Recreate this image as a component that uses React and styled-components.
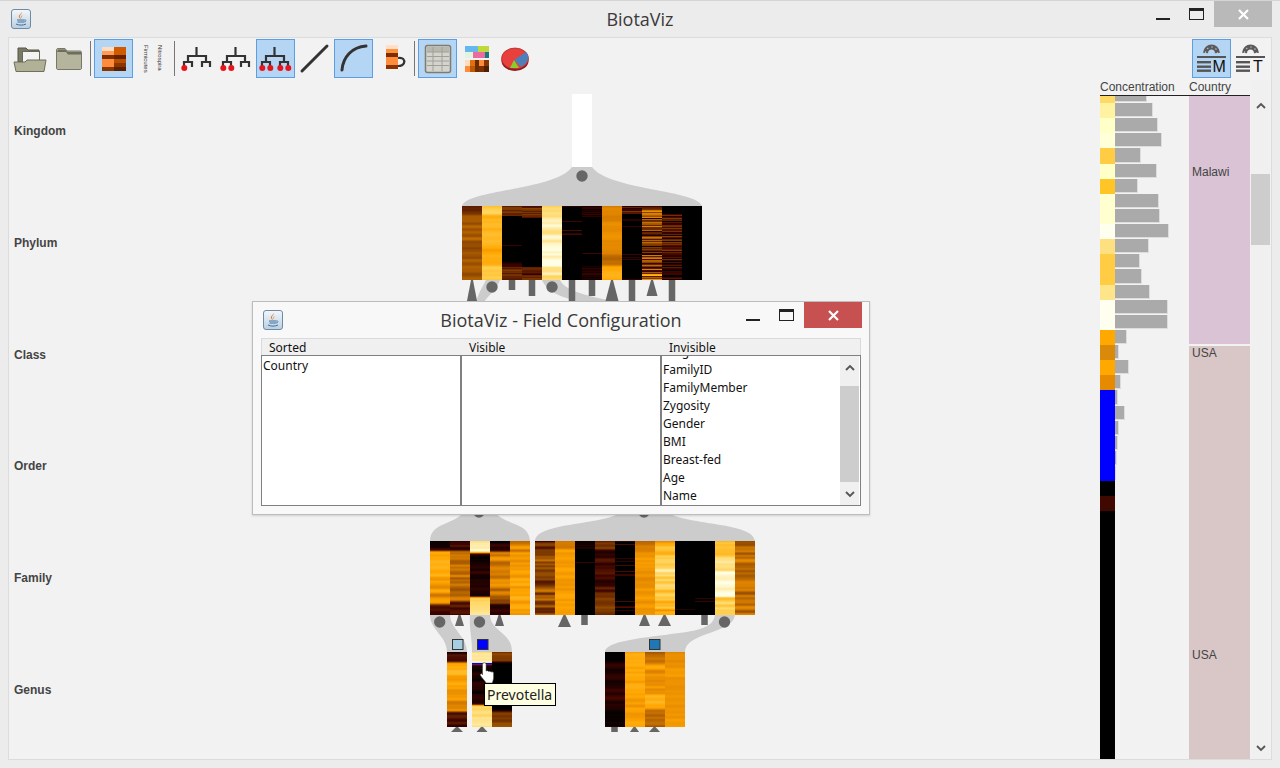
import React from "react";
import styled, { createGlobalStyle } from "styled-components";

const Global = createGlobalStyle`
  html, body { margin: 0; padding: 0; background: #ececec; overflow: hidden; }
  * { box-sizing: border-box; }
`;

const Window = styled.div`
  position: relative;
  width: 1280px;
  height: 768px;
  display: flex;
  flex-direction: column;
  background: #ececec;
  border-top: 1px solid #d4d4d4;
  font-family: "Liberation Sans", Arial, sans-serif;
`;

const TitleBar = styled.div`
  position: relative;
  height: 36px;
  flex: none;
  display: flex;
  align-items: flex-start;
`;

const AppIcon = styled.div`
  margin: ${(p) => p.$margin};
  line-height: 0;
`;

const Title = styled.div`
  flex: 1;
  text-align: center;
  padding-left: 92px;
  font-family: "Open Sans", "Noto Sans", sans-serif;
  color: #3a3a3a;
  font-size: 18px;
  line-height: 36px;
`;

const Controls = styled.div`
  display: flex;
  align-items: flex-start;
  flex: none;
`;

const MinBtn = styled.div`
  width: 14px;
  height: 2px;
  background: #222;
  margin: ${(p) => p.$margin};
`;

const MaxBtn = styled.div`
  width: 15px;
  height: 12px;
  border: 1px solid #222;
  border-top-width: 3px;
  margin: ${(p) => p.$margin};
`;

const CloseBtn = styled.div`
  width: 58px;
  height: 26px;
  background: ${(p) => p.$bg};
  color: #fff;
  display: flex;
  align-items: center;
  justify-content: center;
  margin: ${(p) => p.$margin};
`;

const Body = styled.div`
  flex: 1;
  margin: 0 8px 8px;
  display: flex;
  flex-direction: column;
  background: #f2f2f2;
  border: 1px solid #dcdcdc;
  min-height: 0;
`;

const Toolbar = styled.div`
  height: 42px;
  flex: none;
  display: flex;
  align-items: flex-start;
  padding: 1px 1px 0 1px;
`;

const ToolButton = styled.div`
  width: 39px;
  height: 39px;
  flex: none;
  line-height: 0;
  border: 1px solid ${(p) => (p.$active ? "#5c9ee0" : "transparent")};
  background: ${(p) => (p.$active ? "#b5d5f4" : "transparent")};
  display: flex;
  align-items: center;
  justify-content: center;
`;

const Sep = styled.div`
  width: 1px;
  height: 35px;
  background: #777;
  flex: none;
  margin: 2px ${(p) => p.$right}px 0 ${(p) => p.$left}px;
`;

const Spacer = styled.div`
  flex: 1;
`;

const VerticalLabels = styled.div`
  display: flex;
  gap: 8px;
  line-height: 1;
  writing-mode: vertical-rl;
  flex-direction: column-reverse;
  font-family: "Liberation Sans", sans-serif;
  font-size: 6px;
  color: #333;
`;

const VLabel = styled.span`
  display: block;
  height: 28px;
`;

const Main = styled.div`
  flex: 1;
  display: flex;
  min-height: 0;
`;

const Ranks = styled.div`
  width: 91px;
  flex: none;
  display: flex;
  flex-direction: column;
  gap: 99.8px;
  padding: 45px 0 0 5px;
`;

const Rank = styled.div`
  font-size: 12px;
  line-height: 12px;
  font-weight: 700;
  color: #444;
`;

const Stage = styled.div`
  position: relative;
  width: 1000px;
  flex: none;
  line-height: 0;
`;

const Tip = styled.div`
  position: absolute;
  left: 384px;
  top: 603px;
  width: 72px;
  height: 23px;
  background: #ffffe1;
  border: 1px solid #000;
  color: #222;
  font-family: "Noto Sans", sans-serif;
  font-size: 14px;
  line-height: 22px;
  padding-left: 2px;
`;

const Side = styled.div`
  width: 150px;
  flex: none;
  display: flex;
  flex-direction: column;
`;

const SideHead = styled.div`
  height: 16px;
  flex: none;
  display: flex;
  border-bottom: 1px solid #222;
  color: #444;
  font-size: 12px;
  line-height: 14px;
`;

const HeadCell = styled.div`
  width: ${(p) => p.$w}px;
`;

const SideRow = styled.div`
  flex: 1;
  display: flex;
  min-height: 0;
`;

const ConcCol = styled.div`
  width: 89px;
  display: flex;
  flex-direction: column;
  overflow: hidden;
`;

const ConcRow = styled.div`
  display: flex;
  flex: ${(p) => (p.$fill ? 1 : "none")};
  height: ${(p) => (p.$fill ? "auto" : `${p.$h}px`)};
`;

const Swatch = styled.div`
  width: 15px;
  flex: none;
  background: ${(p) => p.$c};
`;

const Bar = styled.div`
  width: ${(p) => p.$w}px;
  background: #aaa;
  border-right: 1px solid #ddd;
  border-bottom: 1px solid #ddd;
  margin-bottom: 1px;
`;

const CountryCol = styled.div`
  width: 61px;
  display: flex;
  flex-direction: column;
  gap: 2px;
`;

const CountryBlock = styled.div`
  flex: ${(p) => (p.$h ? "none" : 1)};
  height: ${(p) => (p.$h ? `${p.$h}px` : "auto")};
  background: ${(p) => p.$c};
  padding: ${(p) => p.$pad}px 0 0 3px;
  color: #444;
  font-size: 12px;
  line-height: 13px;
`;

const CountryName = styled.div`
  margin-top: ${(p) => p.$mt || 0}px;
`;

const Scroll = styled.div`
  width: 19px;
  flex: none;
  display: flex;
  flex-direction: column;
  align-items: stretch;
  margin: 0 ${(p) => p.$mr || 0}px 0 ${(p) => p.$ml || 0}px;
  background: #f0f0f0;
`;

const ScrollEnd = styled.div`
  height: ${(p) => p.$h}px;
  flex: none;
  display: flex;
  align-items: ${(p) => (p.$pad ? "flex-start" : "center")};
  padding-top: ${(p) => p.$pad || 0}px;
  justify-content: center;
  line-height: 0;
`;

const Thumb = styled.div`
  height: ${(p) => p.$h}px;
  flex: none;
  background: #cdcdcd;
`;

const Dialog = styled.div`
  position: absolute;
  left: 252px;
  top: 300px;
  width: 618px;
  height: 214px;
  background: #f8f8f8;
  border: 1px solid #bdbdbd;
  box-shadow: 0 1px 2px rgba(0, 0, 0, 0.15);
  display: flex;
  flex-direction: column;
  padding: 0 8px 8px;
`;

const DialogBar = styled.div`
  height: 36px;
  flex: none;
  display: flex;
  margin: 0 -8px;
`;

const FieldHead = styled.div`
  display: grid;
  grid-template-columns: 200px 200px 1fr;
  height: 17px;
  flex: none;
  background: #f0f0f0;
  border: 1px solid #dadada;
  border-bottom: none;
  font-family: "Noto Sans", sans-serif;
  font-size: 12px;
  line-height: 17px;
  color: #111;
`;

const FieldTitle = styled.div`
  padding-left: 7px;
`;

const Fields = styled.div`
  display: grid;
  grid-template-columns: 200px 200px 1fr;
  flex: 1;
  min-height: 0;
  border: 1px solid #808080;
  background: #fff;
  font-family: "Noto Sans", sans-serif;
  font-size: 12px;
  line-height: 18px;
  color: #111;
`;

const FieldList = styled.div`
  border-right: ${(p) => (p.$last ? "none" : "2px solid #808080")};
  padding-left: 1px;
  overflow: hidden;
  display: flex;
`;

const Items = styled.div`
  flex: 1;
  margin-top: ${(p) => p.$mt}px;
`;

// ---- heat map helpers

const RAMP = [
  [0, [0, 0, 0]],
  [0.15, [64, 4, 0]],
  [0.35, [135, 66, 0]],
  [0.52, [224, 132, 0]],
  [0.62, [255, 165, 0]],
  [0.8, [255, 208, 80]],
  [1, [255, 255, 232]],
];

const heat = (v) => {
  const l = Math.max(0, Math.min(1, v));
  for (let i = 1; i < RAMP.length; i++) {
    if (l <= RAMP[i][0]) {
      const [a, ca] = RAMP[i - 1];
      const [b, cb] = RAMP[i];
      const t = (l - a) / (b - a);
      return `rgb(${ca.map((c, k) => Math.round(c + (cb[k] - c) * t)).join(",")})`;
    }
  }
  return "#ffffe8";
};

const rng = (seed) => {
  let s = seed;
  return () => {
    s = (s * 16807) % 2147483647;
    return s / 2147483647;
  };
};

const blur = (vals) =>
  vals.map((v, i) => {
    const a = vals[Math.max(0, i - 1)];
    const b = vals[Math.min(vals.length - 1, i + 1)];
    return (a + 2 * v + b) / 4;
  });

const columnValues = ([segs, noise, lines = 0], seed, h) => {
  const r = rng(seed);
  const vals = [];
  for (let i = 0; i < h; i++) {
    const f = i / h;
    const seg = segs.find((s) => f < s[0]) || segs[segs.length - 1];
    let v = seg[1];
    if (v > 0) v += (r() - 0.5) * noise;
    else if (r() < lines) v = 0.08 + r() * 0.1;
    vals.push(v);
  }
  // the black columns keep their thin lines, the others get smoothed
  if (lines > 0) return vals;
  return blur(blur(vals));
};

// column = [segments [[endFraction, level], ...], noise, chance of a dark red line]
const HeatMap = ({ x, y, cols, seed, h = 74 }) => (
  <g shapeRendering="crispEdges">
    {cols.map((col, c) =>
      columnValues(col, seed * 131 + c * 977 + 7, h).map((v, i) => (
        <rect key={`${c}-${i}`} x={x + c * 20} y={y + i} width={20} height={1.05} fill={heat(v)} />
      ))
    )}
  </g>
);

const PHYLUM = [
  [[[0.12, 0.27], [1, 0.4]], 0.16],
  [[[0.12, 0.8], [0.55, 0.7], [0.8, 0.64], [1, 0.77]], 0.16],
  [[[0.13, 0.3], [0.75, 0], [0.82, 0.12], [1, 0.28]], 0.14, 0.03],
  [[[0.15, 0.27], [0.82, 0], [1, 0.22]], 0.2, 0.01],
  [[[0.18, 0.86], [0.38, 0.93], [0.55, 0.95], [0.8, 1], [0.92, 0.9], [1, 0.8]], 0.2],
  [[[1, 0]], 0, 0.07],
  [[[0.14, 0.1], [0.8, 0], [1, 0.08]], 0.12, 0.06],
  [[[0.65, 0.54], [0.8, 0.46], [1, 0.64]], 0.12],
  [[[0.1, 0.2], [0.8, 0], [1, 0]], 0.25, 0.06],
  [[[0.14, 0.36], [0.7, 0.28], [0.9, 0.32], [1, 0.46]], 0.5, 0.01],
  [[[0.1, 0], [0.72, 0.18], [1, 0.06]], 0.34, 0.01],
  [[[1, 0]], 0],
];
const FAM_L = [
  [[[0.13, 0.1], [0.17, 0.75], [0.55, 0.66], [0.85, 0.56], [1, 0.2]], 0.24],
  [[[0.13, 0.14], [0.55, 0.46], [0.8, 0.42], [1, 0.2]], 0.3],
  [[[0.15, 0.92], [0.75, 0.06], [1, 0.85]], 0.2],
  [[[0.13, 0.08], [0.75, 0.5], [0.85, 0.38], [1, 0.12]], 0.28],
  [[[0.15, 0.52], [1, 0.62]], 0.24],
];
const FAM_R = [
  [[[1, 0.33]], 0.5],
  [[[0.1, 0.52], [1, 0.6]], 0.14],
  [[[0.1, 0.05], [1, 0]], 0.05, 0.02],
  [[[0.1, 0.3], [0.75, 0.16], [1, 0.3]], 0.28],
  [[[1, 0]], 0, 0.12],
  [[[0.15, 0.47], [1, 0.57]], 0.16],
  [[[0.2, 0.68], [0.7, 0.82], [1, 0.68]], 0.4],
  [[[1, 0]], 0, 0.03],
  [[[1, 0]], 0, 0.03],
  [[[0.2, 0.72], [0.4, 0.85], [0.75, 0.97], [1, 0.76]], 0.26],
  [[[1, 0.46]], 0.26],
];
const GEN_A = [[[[0.13, 0.17], [0.2, 0.6], [0.5, 0.66], [0.8, 0.56], [1, 0.2]], 0.3]];
const GEN_B = [
  [[[0.15, 0.92], [0.18, 0.1], [0.7, 0.06], [1, 0.85]], 0.24],
  [[[0.13, 0.32], [0.78, 0], [1, 0.34]], 0.2],
];
const GEN_C = [
  [[[0.13, 0], [0.45, 0.08], [0.75, 0.1], [1, 0.02]], 0.16],
  [[[1, 0.62]], 0.16],
  [[[0.15, 0.47], [0.55, 0.58], [0.75, 0.64], [1, 0.48]], 0.2],
  [[[0.15, 0.54], [1, 0.57]], 0.1],
];

// ---- tree diagram

const Circle = ({ x, y }) => <circle cx={x} cy={y} r={5.7} fill="#666" />;
const Tri = ({ x, y, w, h }) => <path d={`M${x - w / 2} ${y + h}L${x - 1} ${y}h2L${x + w / 2} ${y + h}Z`} fill="#666" />;
const Box = ({ x, y, h, w = 6.5 }) => <rect x={x - w / 2} y={y} width={w} height={h} fill="#666" />;
const Mark = ({ x, c }) => <rect x={x} y={639.5} width={10.5} height={10} fill={c} stroke="#333" />;

const Tree = () => (
  // viewBox keeps the numbers in page coordinates
  <svg width="1000" height="680" viewBox="100 80 1000 680">
    <rect x="572" y="94" width="20" height="74" fill="#fff" />
    <path d="M462 206C466 190 556 190 572 167H592C608 190 698 190 702 206Z" fill="#ccc" />
    <Circle x={582} y={176} />
    <HeatMap x={462} y={206} cols={PHYLUM} seed={3} />

    <path d="M476 302C479 292 482 288 486 280H500C497 288 490 294 484 302Z" fill="#ccc" />
    <path d="M542 280H560C566 292 590 296 616 302H580C566 298 548 294 542 280Z" fill="#ccc" />
    <Tri x={472} y={280} w={10} h={21} />
    <Circle x={492} y={287} />
    <Box x={512} y={280} h={10} />
    <Box x={532} y={280} h={16} />
    <Circle x={552} y={287} />
    <Box x={572} y={280} h={21} />
    <Box x={592} y={280} h={16} />
    <Tri x={612} y={280} w={13} h={21} />
    <Box x={632} y={280} h={21} />
    <Tri x={652} y={280} w={11} h={16} />
    <Box x={672} y={280} h={21} />

    <path d="M430 541C431 522 452 526 464 512H494C507 526 529 522 530 541Z" fill="#ccc" />
    <path d="M535 541C537 522 600 526 622 512H666C690 526 753 522 755 541Z" fill="#ccc" />
    <Circle x={479} y={512} />
    <Circle x={644} y={512} />
    <HeatMap x={430} y={541} cols={FAM_L} seed={11} />
    <HeatMap x={535} y={541} cols={FAM_R} seed={23} />

    <path d="M430 615H450C451 630 467 636 467 652H447C447 636 430 630 430 615Z" fill="#ccc" />
    <path d="M470 615H490C491 632 512 632 512 652H472C472 636 469 630 470 615Z" fill="#ccc" />
    <path d="M605 652C605 636 690 636 705 627C712 624 714 620 715 615H735C733 634 685 632 685 652Z" fill="#ccc" />
    <Circle x={439.7} y={622} />
    <Tri x={459.5} y={615} w={9} h={11} />
    <Circle x={479.5} y={622} />
    <Tri x={499.5} y={615} w={9} h={11} />
    <Tri x={564.5} y={615} w={13} h={12} />
    <Box x={584.5} y={615} h={10} />
    <Tri x={644.5} y={615} w={11} h={11} />
    <Tri x={664.5} y={615} w={13} h={11} />
    <Box x={704.5} y={615} h={10} />
    <Circle x={724.5} y={622} />

    <Mark x={452.5} c="#a6cee3" />
    <Mark x={477.5} c="#0000ff" />
    <Mark x={649.5} c="#1f78b4" />

    <HeatMap x={447} y={652} cols={GEN_A} seed={31} h={75} />
    <HeatMap x={472} y={652} cols={GEN_B} seed={37} h={75} />
    <HeatMap x={605} y={652} cols={GEN_C} seed={41} h={75} />
    <rect x="472" y="663" width="20" height="1.5" fill="#0000ff" />

    <Tri x={457} y={727} w={12} h={5} />
    <Tri x={482} y={727} w={11} h={5} />
    <Box x={614.5} y={727} h={5} />
    <Tri x={634.5} y={727} w={9} h={5} />
    <Tri x={654.5} y={727} w={11} h={5} />

    <path
      d="M482.5 664.5a1.8 1.8 0 0 1 3.600 0V671c1-.6 2.200-.4 2.600.5.900-.6 2-.3 2.300.6.900-.5 2.600-.2 2.600 1.200V678c0 2-1 3-1.200 5H486c-1-2.400-4-5-5.600-7.600-.7-1.200.7-2.400 1.800-1.400l.3.900Z"
      fill="#fff"
      stroke="#333"
      strokeWidth="0.5"
    />
  </svg>
);

// ---- toolbar icons

const JavaIcon = () => (
  <svg width="21" height="21" viewBox="0 0 21 21">
    <defs>
      <linearGradient id="jv" x1="0" y1="0" x2="0" y2="1">
        <stop offset="0" stopColor="#f4f7fa" />
        <stop offset="1" stopColor="#b9cfe2" />
      </linearGradient>
    </defs>
    <rect x="0.5" y="0.5" width="19" height="19" rx="2.5" fill="url(#jv)" stroke="#6f8aa4" />
    <path d="M10 3c2 2-2 3-1 5 .4 1 1 1.300 1 2-1.600-1-3-2.500-1.500-4C9.500 5 10.300 4.400 10 3Z" fill="#e5761e" />
    <path d="M12 6c-1 1-1.500 1.500-.8 3-1-.6-1.700-2 .8-3Z" fill="#e5761e" />
    <path d="M6 11h7.500M6.500 13h6.500M5 15c3 1.500 7 1.500 10 0" stroke="#3c6f9c" strokeWidth="1" fill="none" />
    <path d="M13.500 11c2-.5 2 1.800-.5 2" stroke="#3c6f9c" strokeWidth="0.8" fill="none" />
  </svg>
);

const FolderOpen = () => (
  <svg width="34" height="30" viewBox="0 0 34 30">
    <path d="M5 4h8l2 2h11v12H5Z" fill="#7b7b64" stroke="#55554a" />
    <rect x="9.500" y="7.500" width="17" height="12" fill="#f4f4f2" stroke="#6a6a58" />
    <path d="M1 18h11l2-2h19l-2 11.500H3Z" fill="#b1b197" stroke="#6f6f5c" />
  </svg>
);

const FolderClosed = () => (
  <svg width="28" height="24" viewBox="0 0 28 24">
    <path d="M1.500 3c0-1 .5-1.500 1.500-1.500h7l2 2.500h13c1 0 1.500.5 1.500 1.500V21c0 1-.5 1.500-1.500 1.500H3c-1 0-1.500-.5-1.500-1.500Z" fill="#b5b59d" stroke="#77776a" />
    <path d="M2 5h9l2 2.500h13V5H12.500L10 2.500H3Z" fill="#6d6d59" />
  </svg>
);

const HeatIcon = () => {
  const left = ["#ffdcc0", "#ff9a58", "#7c3000", "#ff8c3c", "#ff8c3c", "#8a3600"];
  const right = ["#d05a00", "#d05a00", "#632300", "#b84c00", "#8a3600", "#5c2000"];
  return (
    <svg width="24" height="24" viewBox="0 0 24 24" shapeRendering="crispEdges">
      {left.map((c, i) => (
        <rect key={i} x="0" y={i * 4} width="12" height="4" fill={c} />
      ))}
      {right.map((c, i) => (
        <rect key={i} x="12" y={i * 4} width="12" height="4" fill={c} />
      ))}
    </svg>
  );
};

const TreeIcon = ({ dots }) => {
  const xs = [5.3, 13.3, 23.3, 31.3];
  return (
    <svg width="37" height="37" viewBox="0 0 37 37">
      <path
        d="M18 7V15M9.500 21V16H27.500V21M5.500 27V22H13.500V27M23.500 27V22H31.500V27"
        transform="translate(-0.5 0)"
        fill="none"
        stroke="#333"
        strokeWidth="2.200"
      />
      {xs.slice(0, dots).map((x, i) => (
        <circle key={i} cx={x} cy={28} r={3} fill="#e8141c" />
      ))}
    </svg>
  );
};

const LineIcon = () => (
  <svg width="37" height="37" viewBox="0 0 37 37">
    <path d="M6 31L31 6" stroke="#333" strokeWidth="3" strokeLinecap="round" />
  </svg>
);

const CurveIcon = () => (
  <svg width="37" height="37" viewBox="0 0 37 37">
    <path d="M7 30C8 17 17 7 31 6" stroke="#333" strokeWidth="3" strokeLinecap="round" fill="none" />
  </svg>
);

const LoopIcon = () => {
  const rows = ["#ffdfc7", "#ff9040", "#7c2e00", "#ff8c3c", "#ff8c3c", "#8a3300"];
  return (
    <svg width="37" height="37" viewBox="0 0 37 37">
      <g shapeRendering="crispEdges">
        {rows.map((c, i) => (
          <rect key={i} x="12" y={5 + i * 4} width="12" height="4" fill={c} />
        ))}
      </g>
      <path d="M24 18c5-1 7 2 6 5-1 2.500-3 3-6 3" stroke="#333" strokeWidth="2.200" fill="none" />
    </svg>
  );
};

const TableIcon = () => (
  <svg width="30" height="32" viewBox="0 0 30 32">
    <rect x="2.500" y="2.500" width="25" height="27" rx="2" fill="#d4d4ce" stroke="#7c7c72" strokeWidth="1.500" />
    <rect x="4" y="4" width="22" height="5" fill="#b8b8b0" />
    <path d="M10 4V28M19 4V28M4 9H26M4 13.500H26M4 18H26M4 22.500H26" stroke="#a0a096" fill="none" />
  </svg>
);

const ColorIcon = () => {
  const shades = ["#ffdcc0", "#e07010", "#6c2c00", "#ff8c3c", "#8a3600", "#ff8c3c", "#c05a00", "#6c2c00", "#7c3000", "#4e2000"];
  return (
    <svg width="24" height="26" viewBox="0 0 24 26" shapeRendering="crispEdges">
      <rect x="0" y="0" width="13" height="6" fill="#66b8ec" />
      <rect x="13" y="0" width="11" height="6" fill="#bfd93c" />
      <rect x="0" y="6" width="8" height="6" fill="#dff5e2" />
      <rect x="8" y="6" width="12" height="6" fill="#ec6aa0" />
      <rect x="20" y="6" width="4" height="6" fill="#127a80" />
      {shades.map((c, i) => (
        <rect key={i} x={(i % 5) * 4.8} y={14 + Math.floor(i / 5) * 6} width="4.8" height="6" fill={c} />
      ))}
    </svg>
  );
};

const PieIcon = () => (
  <svg width="30" height="26" viewBox="0 0 30 26">
    <ellipse cx="14" cy="15" rx="13.500" ry="10" fill="#8c1c22" />
    <ellipse cx="14" cy="12.500" rx="13.500" ry="10.500" fill="#e8403c" stroke="#a82428" strokeWidth="0.7" />
    <path d="M13 14L25 6C29 10 28 17 20 21Z" fill="#4f7fb8" />
    <path d="M13 14L18 22H9Z" fill="#8ccc28" />
  </svg>
);

const LayoutIcon = ({ letter }) => (
  <svg width="37" height="37" viewBox="0 0 37 37">
    <path d="M12.500 13C13 5 24 5 24.500 13" fill="none" stroke="#5a5a5a" strokeWidth="5" />
    <path d="M12.500 13C13 5 24 5 24.500 13" fill="none" stroke="#bbb" strokeWidth="1.200" strokeDasharray="1.500 3" />
    <rect x="4" y="16" width="29" height="2" fill="#555" />
    <rect x="4" y="21" width="14" height="2.400" fill="#555" />
    <rect x="4" y="25.500" width="14" height="2.400" fill="#555" />
    <rect x="4" y="29.500" width="14" height="2.400" fill="#555" />
    <text x={letter === "M" ? 19.500 : 21} y="32" fontFamily="Liberation Sans, sans-serif" fontSize="16" fill="#111">
      {letter}
    </text>
  </svg>
);

const Chevron = ({ up }) => (
  <svg width="10" height="7" viewBox="0 0 10 7">
    <path d={up ? "M1 6L5 2L9 6" : "M1 1L5 5L9 1"} fill="none" stroke="#555" strokeWidth="1.800" />
  </svg>
);

const Cross = () => (
  <svg width="11" height="11" viewBox="0 0 11 11">
    <path d="M1 1L10 10M10 1L1 10" stroke="#fff" strokeWidth="2.200" />
  </svg>
);

// ---- data

const CONC = [
  ["#ffd966", 32, 7],
  ["#fff2a0", 38],
  ["#ffffc8", 43],
  ["#ffffd8", 47],
  ["#ffcc44", 26],
  ["#ffffc8", 42],
  ["#ffc426", 23],
  ["#ffffd0", 44],
  ["#ffffd0", 45],
  ["#fffff0", 54],
  ["#ffe080", 34],
  ["#ffcc44", 25],
  ["#ffcc44", 27],
  ["#ffe58a", 35],
  ["#fffff0", 53],
  ["#fffff0", 53],
  ["#ffa800", 12],
  ["#d98a08", 4],
  ["#ffa800", 14],
  ["#e68a00", 6],
  ["#0000ff", 3],
  ["#0000ff", 10],
  ["#0000ff", 4],
  ["#0000ff", 3],
  ["#0000ff", 2],
  ["#0000ff", 1],
  ["#000000", 0],
  ["#400800", 0],
];

const RANKS = ["Kingdom", "Phylum", "Class", "Order", "Family", "Genus"];
const INVISIBLE = ["Height", "FamilyID", "FamilyMember", "Zygosity", "Gender", "BMI", "Breast-fed", "Age", "Name"];

export default function App() {
  return (
    <Window>
      <Global />
      <TitleBar>
        <AppIcon $margin="8px 0 0 11px">
          <JavaIcon />
        </AppIcon>
        <Title>BiotaViz</Title>
        <Controls>
          <MinBtn $margin="17px 0 0 0" />
          <MaxBtn $margin="7px 0 0 19px" />
          <CloseBtn $bg="#b9b9b9" $margin="0 8px 0 10px">
            <Cross />
          </CloseBtn>
        </Controls>
      </TitleBar>
      <Body>
        <Toolbar>
          <ToolButton>
            <FolderOpen />
          </ToolButton>
          <ToolButton>
            <FolderClosed />
          </ToolButton>
          <Sep $left={2} $right={3} />
          <ToolButton $active>
            <HeatIcon />
          </ToolButton>
          <ToolButton>
            <VerticalLabels>
              <VLabel>Firmicutes</VLabel>
              <VLabel>Nitrospira</VLabel>
            </VerticalLabels>
          </ToolButton>
          <Sep $left={2} $right={3} />
          <ToolButton>
            <TreeIcon dots={1} />
          </ToolButton>
          <ToolButton>
            <TreeIcon dots={2} />
          </ToolButton>
          <ToolButton $active>
            <TreeIcon dots={4} />
          </ToolButton>
          <ToolButton>
            <LineIcon />
          </ToolButton>
          <ToolButton $active>
            <CurveIcon />
          </ToolButton>
          <ToolButton>
            <LoopIcon />
          </ToolButton>
          <Sep $left={2} $right={3} />
          <ToolButton $active>
            <TableIcon />
          </ToolButton>
          <ToolButton>
            <ColorIcon />
          </ToolButton>
          <ToolButton>
            <PieIcon />
          </ToolButton>
          <Spacer />
          <ToolButton $active>
            <LayoutIcon letter="M" />
          </ToolButton>
          <ToolButton>
            <LayoutIcon letter="T" />
          </ToolButton>
        </Toolbar>
        <Main>
          <Ranks>
            {RANKS.map((r) => (
              <Rank key={r}>{r}</Rank>
            ))}
          </Ranks>
          <Stage>
            <Tree />
            <Tip>Prevotella</Tip>
          </Stage>
          <Side>
            <SideHead>
              <HeadCell $w={89}>Concentration</HeadCell>
              <HeadCell $w={61}>Country</HeadCell>
            </SideHead>
            <SideRow>
              <ConcCol>
                {CONC.map(([c, w, h], i) => (
                  <ConcRow key={i} $h={h || 15.13}>
                    <Swatch $c={c} />
                    {w > 0 && <Bar $w={w} />}
                  </ConcRow>
                ))}
                <ConcRow $fill>
                  <Swatch $c="#000" />
                </ConcRow>
              </ConcCol>
              <CountryCol>
                <CountryBlock $c="#d9c3d5" $h={248} $pad={70}>
                  <CountryName>Malawi</CountryName>
                </CountryBlock>
                <CountryBlock $c="#d9c6c6" $pad={1}>
                  <CountryName>USA</CountryName>
                  <CountryName $mt={289}>USA</CountryName>
                </CountryBlock>
              </CountryCol>
            </SideRow>
          </Side>
          <Scroll $ml={1}>
            <ScrollEnd $h={94} $pad={22}>
              <Chevron up />
            </ScrollEnd>
            <Thumb $h={71} />
            <Spacer />
            <ScrollEnd $h={22}>
              <Chevron />
            </ScrollEnd>
          </Scroll>
        </Main>
      </Body>

      <Dialog>
        <DialogBar>
          <AppIcon $margin="8px 0 0 10px">
            <JavaIcon />
          </AppIcon>
          <Title>BiotaViz - Field Configuration</Title>
          <Controls>
            <MinBtn $margin="17px 0 0 0" />
            <MaxBtn $margin="7px 0 0 19px" />
            <CloseBtn $bg="#c75050" $margin="0 7px 0 10px">
              <Cross />
            </CloseBtn>
          </Controls>
        </DialogBar>
        <FieldHead>
          <FieldTitle>Sorted</FieldTitle>
          <FieldTitle>Visible</FieldTitle>
          <FieldTitle>Invisible</FieldTitle>
        </FieldHead>
        <Fields>
          <FieldList>
            <Items $mt={1}>Country</Items>
          </FieldList>
          <FieldList />
          <FieldList $last>
            <Items $mt={-13}>
              {INVISIBLE.map((f) => (
                <div key={f}>{f}</div>
              ))}
            </Items>
            <Scroll $mr={1}>
              <ScrollEnd $h={30} $pad={8}>
                <Chevron up />
              </ScrollEnd>
              <Thumb $h={96} />
              <Spacer />
              <ScrollEnd $h={22}>
                <Chevron />
              </ScrollEnd>
            </Scroll>
          </FieldList>
        </Fields>
      </Dialog>
    </Window>
  );
}
